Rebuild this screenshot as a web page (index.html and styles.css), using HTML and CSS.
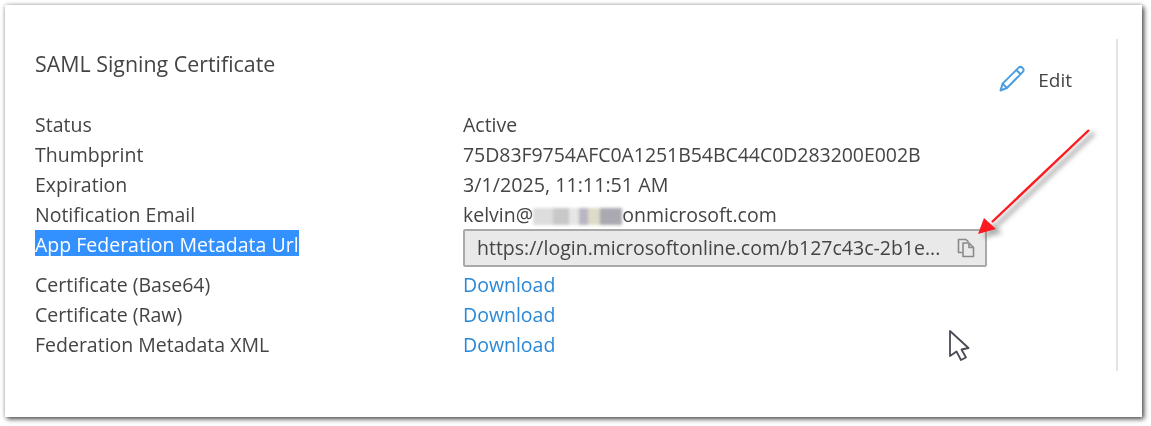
FILE: index.html
```html
<!DOCTYPE html>
<html lang="en">
<head>
<meta charset="utf-8">
<title>SAML Signing Certificate</title>
<link rel="stylesheet" href="styles.css">
</head>
<body>
<main class="card">
  <section class="panel">
    <header class="head">
      <h1 class="title">SAML Signing Certificate</h1>
      <button class="edit" type="button">
        <svg class="edit-icon" width="28" height="28" viewBox="0 0 28 28" fill="none" stroke="#4a9fe3" stroke-width="2" stroke-linejoin="round">
          <path d="M2.5 25.5 L4.6 18.6 L20.4 2.9 C21.6 1.7 23.3 1.7 24.6 2.9 C25.8 4.2 25.8 5.9 24.6 7.1 L8.9 23 Z"/>
          <path d="M18.4 5 L22.6 9.2"/>
          <path d="M4.6 18.6 L8.9 23"/>
        </svg>
        <span>Edit</span>
      </button>
    </header>
    <dl class="props">
      <dt>Status</dt><dd>Active</dd>
      <dt>Thumbprint</dt><dd class="thumb">75D83F9754AFC0A1251B54BC44C0D283200E002B</dd>
      <dt>Expiration</dt><dd class="expiry">3/1/2025, 11:11:51 AM</dd>
      <dt>Notification Email</dt><dd class="email">kelvin@<span class="mask"></span>onmicrosoft.com</dd>
      <dt class="url-label"><span class="selected">App Federation Metadata Url</span></dt>
      <dd class="url-cell">
        <div class="url-box">
          <span class="url-text">https://login.microsoftonline.com/b127c43c-2b1e...</span>
          <svg class="copy" width="18" height="20" viewBox="0 0 18 20" fill="none" stroke="#8a8a8a" stroke-width="1.6" stroke-linejoin="round">
            <path d="M5 14.5 H1.5 V1.5 H9 L11.5 4"/>
            <path d="M6 5 H12 L16.5 9.5 V18.5 H6 Z"/>
            <path d="M12 5 V9.5 H16.5"/>
          </svg>
        </div>
      </dd>
      <dt>Certificate (Base64)</dt><dd><a href="#">Download</a></dd>
      <dt>Certificate (Raw)</dt><dd><a href="#">Download</a></dd>
      <dt>Federation Metadata XML</dt><dd><a href="#">Download</a></dd>
    </dl>
  </section>
  <svg class="overlay" width="1151" height="426" viewBox="0 0 1151 426" fill="none">
    <defs>
      <filter id="soft" x="-20%" y="-20%" width="140%" height="140%"><feGaussianBlur stdDeviation="2.5"/></filter>
    </defs>
    <g filter="url(#soft)" opacity="0.55">
      <path d="M1094 133 L996 226" stroke="#666" stroke-width="4"/>
      <path d="M983 238 L992 223 L1002 233 Z" fill="#666"/>
    </g>
    <path d="M1089 130 L992 222" stroke="#fb1a20" stroke-width="2.4"/>
    <path d="M978 234 L984 218 L996 229 Z" fill="#fb1a20"/>
    <path d="M950 331 L950 356 L956.5 351.5 L961 360 L966 357.5 L961.5 349.5 L968.5 348 Z" fill="#fff" stroke="#4a4a55" stroke-width="1.8" stroke-linejoin="round"/>
  </svg>
</main>
</body>
</html>
```
FILE: styles.css
```css
* { box-sizing: border-box; }
html, body { margin: 0; background: #fff; }
body { width: 1151px; height: 426px; overflow: hidden; font-family: "Open Sans", "Noto Sans", sans-serif; color: #444; }
.card {
  position: relative;
  width: 1137px;
  height: 412px;
  margin: 5px 0 0 5px;
  padding: 34px 0 0 30px;
  background: #fff;
  box-shadow: 2px 2px 5px rgba(0, 0, 0, 0.7), 0 0 4px rgba(0, 0, 0, 0.2);
}
.panel {
  width: 1083px;
  height: 332px;
  border-right: 2px solid #e4e4e4;
  filter: blur(0.55px);
}
.head { display: flex; justify-content: space-between; align-items: flex-start; height: 71px; padding-right: 44px; }
.title { margin: 10px 0 0; font-size: 21.4px; line-height: 30px; font-weight: 400; }
.edit { display: flex; align-items: center; gap: 12px; margin-top: 26px; padding: 0; border: 0; background: none; font: inherit; font-size: 19px; line-height: 30px; color: #444; }
.edit-icon { margin-top: -2px; }
.props { display: grid; grid-template-columns: 428px 1fr; margin: 0; font-size: 19.5px; line-height: 30px; }
.props dt, .props dd { margin: 0; height: 30px; white-space: nowrap; }
.props .url-label, .props .url-cell { height: 40px; }
.thumb { letter-spacing: -0.05px; }
.expiry { font-size: 19.7px; }
.selected { display: inline-block; height: 26px; line-height: 30px; background: #3391ff; color: #fff; }
.mask { display: inline-block; width: 89px; height: 17px; vertical-align: -3px; filter: blur(1.5px); background: linear-gradient(90deg, #ddd 0 22%, #c8c8c8 22% 40%, #e6e6e6 40% 52%, #b9b6c4 52% 62%, #dedbc9 62% 75%, #aaa8b0 75% 100%); }
.url-box { display: flex; align-items: center; justify-content: space-between; width: 524px; height: 38px; margin-top: -1px; padding: 0 10px 0 12px; background: #e9e9e9; border: 2px solid #a9a9a9; border-radius: 2px; }
.url-text { color: #444; }
.copy { flex: none; }
a { color: #2b88d8; text-decoration: none; }
.overlay { position: absolute; left: -5px; top: -5px; pointer-events: none; }
```
